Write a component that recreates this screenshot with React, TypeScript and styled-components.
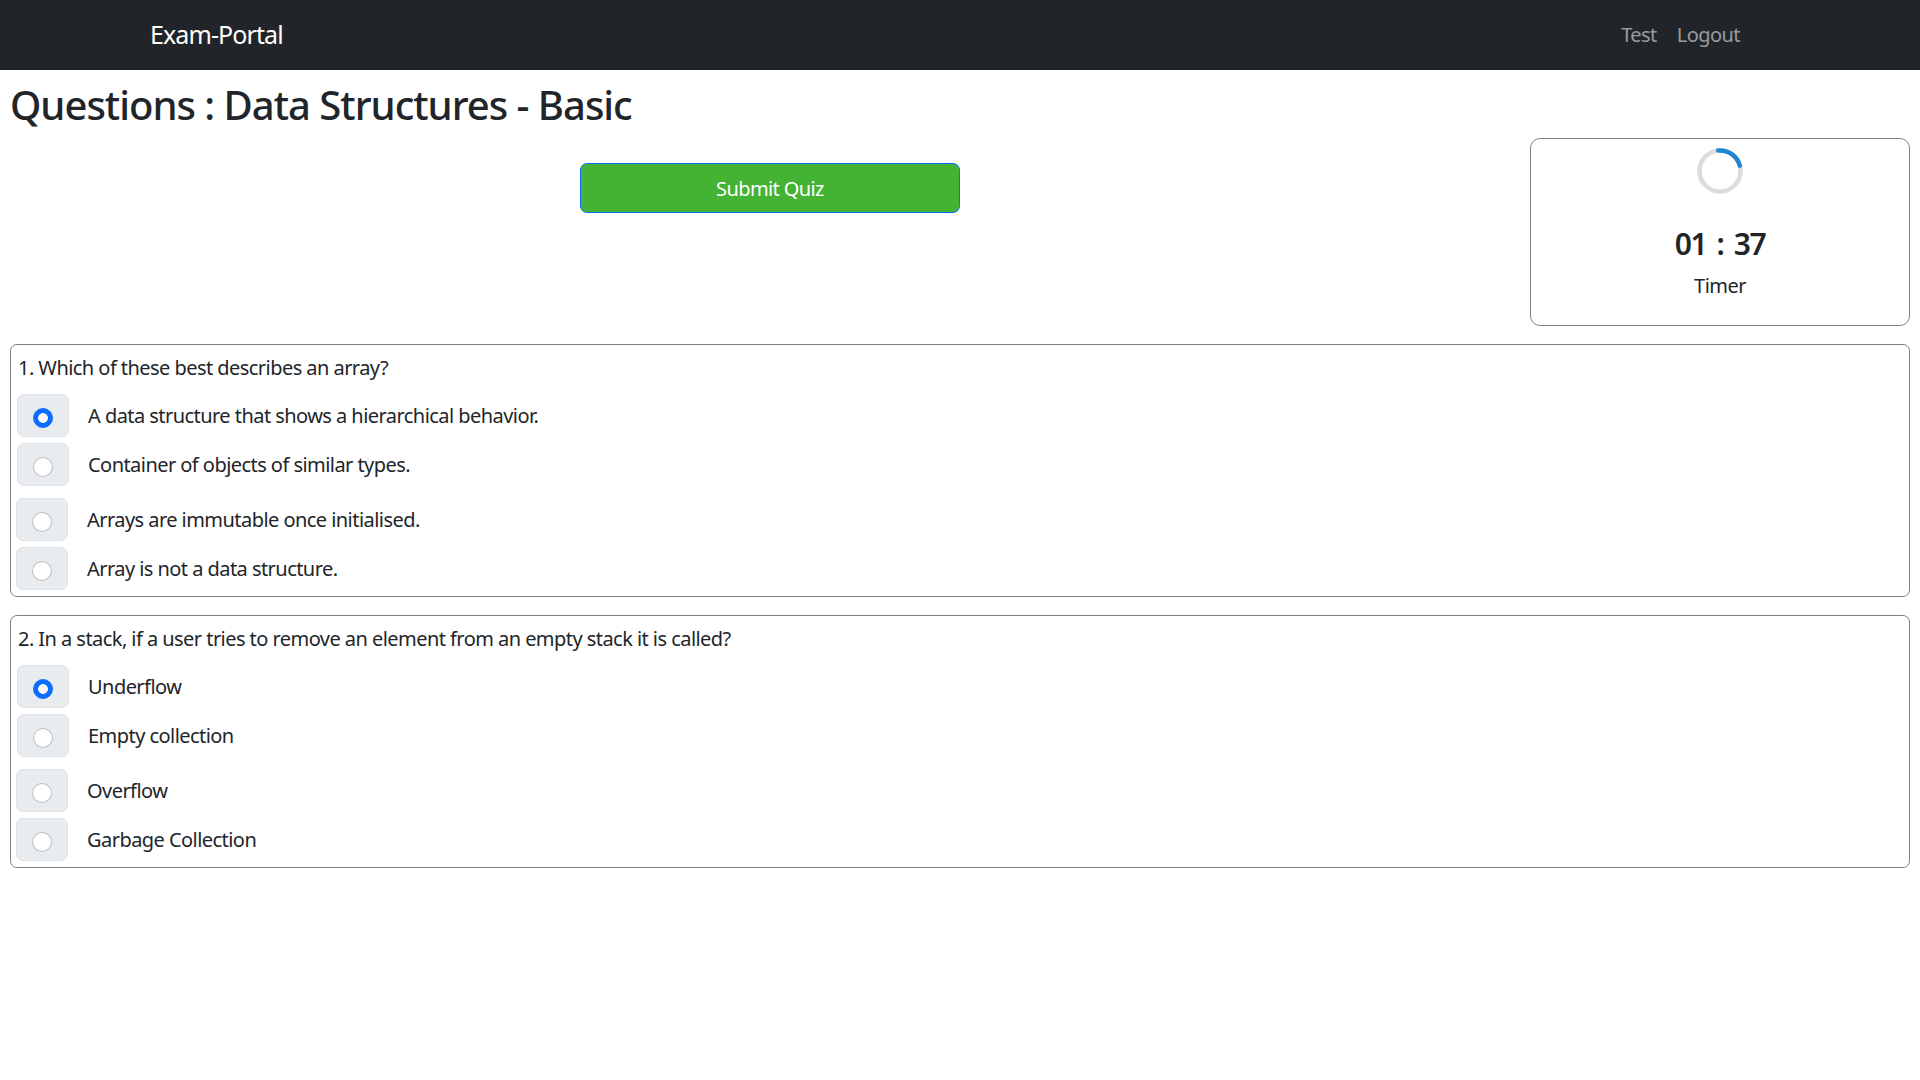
import React from 'react';
import styled, { createGlobalStyle } from 'styled-components';

const GlobalStyle = createGlobalStyle`
  * {
    box-sizing: border-box;
  }
  body {
    margin: 0;
    background: #fff;
    color: #212529;
    font-family: "Noto Sans", "Open Sans", Arial, sans-serif;
    font-size: 20px;
    line-height: 1.5;
    letter-spacing: -0.55px;
  }
`;

const Navbar = styled.nav`
  height: 70px;
  background-color: #212529;
  display: flex;
  align-items: center;
  justify-content: space-between;
  padding: 0 170px 0 150px;
`;

const Brand = styled.a`
  font-size: 25px;
  color: #fff;
  text-decoration: none;
  letter-spacing: -0.9px;
`;

const NavLinks = styled.div`
  display: flex;
`;

const NavLink = styled.a`
  padding: 0 10px;
  color: rgba(255, 255, 255, 0.55);
  text-decoration: none;
`;

const Page = styled.main`
  padding: 0 10px;
`;

const Title = styled.h1`
  margin: 11px 0 0;
  font-size: 40px;
  font-weight: 500;
  line-height: 48px;
  letter-spacing: -1px;
`;

const TopRow = styled.div`
  display: flex;
  align-items: flex-start;
  margin-top: 9px;
`;

const SubmitArea = styled.div`
  flex: 1;
  display: flex;
  justify-content: center;
  padding-top: 25px;
`;

const SubmitButton = styled.button`
  width: 380px;
  height: 50px;
  background-color: #44b233;
  border: 1px solid #0d6efd;
  border-radius: 7px;
  color: #fff;
  font-family: inherit;
  font-size: 20px;
  letter-spacing: -0.6px;
  cursor: pointer;
`;

const TimerCard = styled.div`
  width: 380px;
  border: 1px solid #808080;
  border-radius: 10px;
  padding: 9px 10px 24px;
  text-align: center;
`;

const Spinner = styled.svg`
  display: block;
  margin: 0 auto;
`;

const TimerValue = styled.h4`
  margin: 32px 0 0;
  font-size: 30px;
  font-weight: 600;
  line-height: 36px;
  letter-spacing: -1.4px;
  word-spacing: 4px;
`;

const TimerLabel = styled.div`
  margin-top: 9px;
  line-height: 30px;
`;

const QuestionCard = styled.section`
  border: 1px solid #808080;
  border-radius: 7px;
  padding: 8px 6px 6px;
  margin-top: 18px;
`;

const QuestionText = styled.div`
  line-height: 30px;
  padding-left: 1px;
`;

const OptionRow = styled.label<{ $gap: number; $shift: number }>`
  display: flex;
  align-items: center;
  gap: 19px;
  margin-top: ${p => p.$gap}px;
  margin-left: ${p => p.$shift}px;
`;

const RadioBox = styled.span`
  width: 52px;
  height: 43px;
  display: flex;
  align-items: center;
  justify-content: center;
  padding-top: 5px;
  background-color: #e9ecef;
  border: 1px solid #dee2e6;
  border-radius: 7px;
`;

const Radio = styled.input`
  appearance: none;
  margin: 0;
  width: 20px;
  height: 20px;
  border-radius: 50%;
  border: 1.25px solid rgba(0, 0, 0, 0.25);
  background: #fff;

  &:checked {
    border-color: #0d6efd;
    background: radial-gradient(circle, #fff 0 4.5px, #0d6efd 5.2px);
  }
`;

const OptionText = styled.span`
  line-height: 30px;
`;

interface QuizQuestion {
  text: string;
  options: string[];
  selected: number;
}

const questions: QuizQuestion[] = [
  {
    text: '1. Which of these best describes an array?',
    options: [
      'A data structure that shows a hierarchical behavior.',
      'Container of objects of similar types.',
      'Arrays are immutable once initialised.',
      'Array is not a data structure.',
    ],
    selected: 0,
  },
  {
    text: '2. In a stack, if a user tries to remove an element from an empty stack it is called?',
    options: ['Underflow', 'Empty collection', 'Overflow', 'Garbage Collection'],
    selected: 0,
  },
];

// the options come in two pairs, the second pair sits a little apart
const rowGaps = [11, 6, 12, 6];
const rowShifts = [0, 0, -1, -1];

const App: React.FC = () => {
  return (
    <>
      <GlobalStyle />
      <Navbar>
        <Brand href="#">Exam-Portal</Brand>
        <NavLinks>
          <NavLink href="#">Test</NavLink>
          <NavLink href="#">Logout</NavLink>
        </NavLinks>
      </Navbar>
      <Page>
        <Title>Questions : Data Structures - Basic</Title>
        <TopRow>
          <SubmitArea>
            <SubmitButton>Submit Quiz</SubmitButton>
          </SubmitArea>
          <TimerCard>
            <Spinner width="46" height="46" viewBox="0 0 46 46">
              <circle cx="23" cy="23" r="20.5" fill="none" stroke="#dcdcdc" strokeWidth="4.5" />
              <path
                d="M21.21 2.58 A20.5 20.5 0 0 1 42.8 17.69"
                fill="none"
                stroke="#2185d0"
                strokeWidth="4.5"
                strokeLinecap="round"
              />
            </Spinner>
            <TimerValue>01 : 37</TimerValue>
            <TimerLabel>Timer</TimerLabel>
          </TimerCard>
        </TopRow>
        {questions.map((q, qi) => (
          <QuestionCard key={qi}>
            <QuestionText>{q.text}</QuestionText>
            {q.options.map((opt, oi) => (
              <OptionRow key={oi} $gap={rowGaps[oi]} $shift={rowShifts[oi]}>
                <RadioBox>
                  <Radio type="radio" name={`q${qi}`} defaultChecked={oi === q.selected} />
                </RadioBox>
                <OptionText>{opt}</OptionText>
              </OptionRow>
            ))}
          </QuestionCard>
        ))}
      </Page>
    </>
  );
};

export default App;
